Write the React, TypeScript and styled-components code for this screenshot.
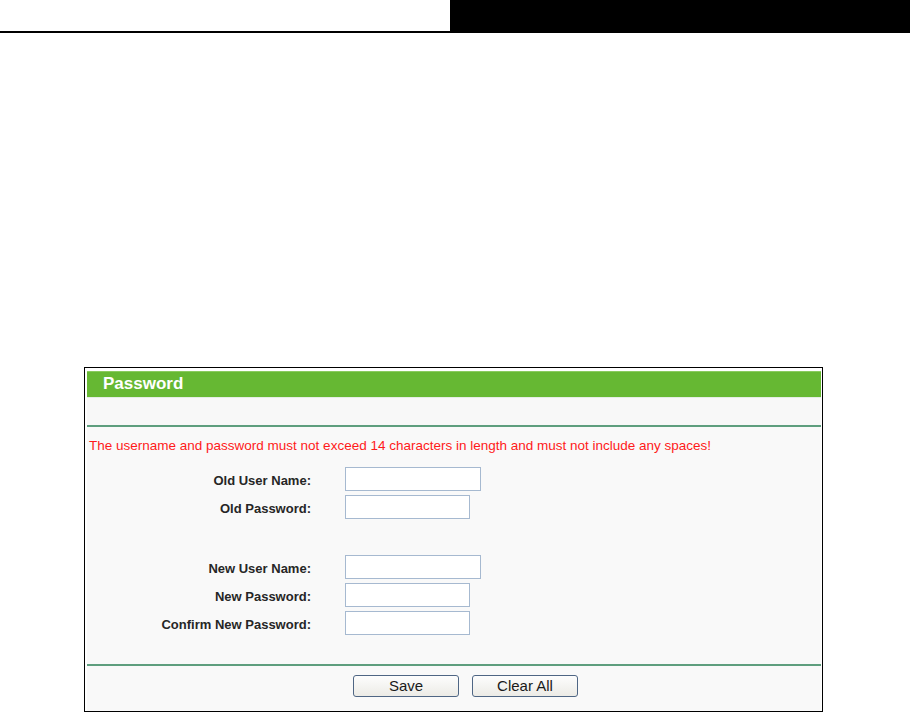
import * as React from "react";
import styled, { createGlobalStyle } from "styled-components";

const GlobalStyle = createGlobalStyle`
  html, body {
    margin: 0;
    padding: 0;
    background: #fff;
  }
  body {
    font-family: "Liberation Sans", Arial, sans-serif;
  }
`;

const fields = [
  { label: "Old User Name:", wide: true },
  { label: "Old Password:", wide: false },
  null,
  { label: "New User Name:", wide: true },
  { label: "New Password:", wide: false },
  { label: "Confirm New Password:", wide: false },
];

export default function App() {
  return (
    <>
      <GlobalStyle />
      <Page>
        <TopBar>
          <TopLeft />
          <TopRight />
        </TopBar>

        <Frame>
          <TitleBar>Password</TitleBar>
          <Blank />
          <Divider />
          <Notice>
            The username and password must not exceed 14 characters in length and must not include any
            spaces!
          </Notice>

          <FormGrid>
            {fields.map((f, i) =>
              f ? (
                <React.Fragment key={i}>
                  <Label>{f.label}</Label>
                  <Cell>
                    <TextInput $wide={f.wide} type={f.label.includes("Password") ? "password" : "text"} />
                  </Cell>
                </React.Fragment>
              ) : (
                <Spacer key={i} />
              )
            )}
          </FormGrid>

          <Divider />
          <Actions>
            <Button>Save</Button>
            <Button>Clear All</Button>
          </Actions>
        </Frame>
      </Page>
    </>
  );
}

const Page = styled.div`
  width: 910px;
  height: 712px;
  overflow: hidden;
  display: flex;
  flex-direction: column;
`;

const TopBar = styled.div`
  display: flex;
  height: 33px;
  margin-bottom: 334px;
`;

const TopLeft = styled.div`
  width: 450px;
  border-bottom: 2px solid #000;
`;

const TopRight = styled.div`
  flex: 1;
  background: #000;
`;

const Frame = styled.div`
  margin-left: 84px;
  width: 739px;
  height: 345px;
  box-sizing: border-box;
  border: 1px solid #000;
  padding: 3px 1px 0 2px;
  background: #fff;
  display: flex;
  flex-direction: column;
`;

const TitleBar = styled.div`
  height: 26px;
  box-sizing: border-box;
  background: #66b833;
  border-top: 1px solid #8acb5e;
  color: #fff;
  font-size: 17px;
  font-weight: bold;
  line-height: 24px;
  padding-left: 16px;
`;

const Blank = styled.div`
  height: 28px;
  background: #f8f8f8;
  border-top: 1px solid #e4ede4;
  box-sizing: border-box;
`;

const Divider = styled.div`
  height: 2px;
  background: #5e9e7e;
`;

const Notice = styled.div`
  background: #f9f9f9;
  color: #ff1a1a;
  font-size: 13.5px;
  line-height: 16px;
  padding: 11px 0 11px 2px;
  white-space: nowrap;
`;

const FormGrid = styled.div`
  display: grid;
  grid-template-columns: 224px 1fr;
  column-gap: 34px;
  background: #f9f9f9;
  padding-bottom: 27px;
`;

const Label = styled.div`
  text-align: right;
  font-size: 13px;
  font-weight: bold;
  color: #262626;
  align-self: center;
  margin-top: 2px;
`;

const Cell = styled.div`
  height: 28px;
  display: flex;
  align-items: center;
`;

const Spacer = styled.div`
  grid-column: 1 / -1;
  height: 32px;
`;

const TextInput = styled.input<{ $wide: boolean }>`
  width: ${(p) => (p.$wide ? 136 : 125)}px;
  height: 24px;
  box-sizing: border-box;
  border: 1px solid #a6b9d0;
  background: #fff;
  margin: 0;
  padding: 0 3px;
  outline: none;
`;

const Actions = styled.div`
  flex: 1;
  background: #f9f9f9;
  display: flex;
  gap: 13px;
  padding: 9px 0 0 266px;
  align-items: flex-start;
`;

const Button = styled.button`
  width: 106px;
  height: 22px;
  box-sizing: border-box;
  border: 1px solid #4f6684;
  border-radius: 3px;
  background: linear-gradient(#fdfdfd, #ecebe6);
  font-family: "Liberation Sans", Arial, sans-serif;
  font-size: 15px;
  color: #1a1a1a;
  padding: 0;
  line-height: 20px;
`;
